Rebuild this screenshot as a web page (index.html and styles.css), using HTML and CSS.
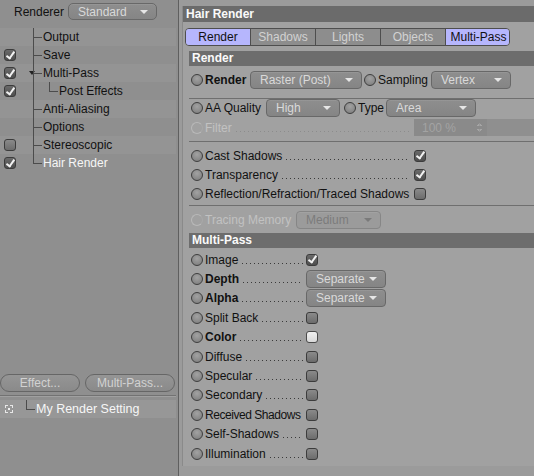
FILE: index.html
```html
<!DOCTYPE html>
<html>
<head>
<meta charset="utf-8">
<link rel="stylesheet" href="styles.css">
</head>
<body>
<div class="app">
  <div class="left">
    <div class="renderer-row">
      <span class="renderer-label">Renderer</span>
      <div class="dd dd-std"><span>Standard</span><i class="arr"></i></div>
    </div>
    <div class="tree">
      <div class="trow band"><div class="cbcol"></div><div class="branch"></div><span class="tl">Output</span></div>
      <div class="trow"><div class="cbcol"><span class="cb on"></span></div><div class="branch"></div><span class="tl">Save</span></div>
      <div class="trow band"><div class="cbcol"><span class="cb on"></span><span class="tri"></span></div><div class="branch"></div><span class="tl">Multi-Pass</span></div>
      <div class="trow"><div class="cbcol"><span class="cb on"></span></div><div class="branch pass"></div><div class="branch last"></div><span class="tl">Post Effects</span></div>
      <div class="trow band"><div class="cbcol"></div><div class="branch"></div><span class="tl">Anti-Aliasing</span></div>
      <div class="trow"><div class="cbcol"></div><div class="branch"></div><span class="tl">Options</span></div>
      <div class="trow band"><div class="cbcol"><span class="cb"></span></div><div class="branch"></div><span class="tl">Stereoscopic</span></div>
      <div class="trow"><div class="cbcol"><span class="cb on"></span></div><div class="branch last"></div><span class="tl white">Hair Render</span></div>
    </div>
    <div class="btns">
      <div class="pill p1">Effect...</div>
      <div class="pill p2">Multi-Pass...</div>
    </div>
    <div class="lsep"></div>
    <div class="setrow">
      <span class="seticon"><span class="dot"></span></span>
      <div class="branch last sb"></div>
      <span class="tl white">My Render Setting</span>
    </div>
  </div>
  <div class="right">
    <div class="content">
      <div class="hdr">Hair Render</div>
      <div class="tabs">
        <div class="tab act">Render</div>
        <div class="tab">Shadows</div>
        <div class="tab">Lights</div>
        <div class="tab">Objects</div>
        <div class="tab act last">Multi-Pass</div>
      </div>
      <div class="sec">
        <div class="sechdr">Render</div>
        <div class="row r-render">
          <span class="rd"></span><span class="lbl b w45">Render</span>
          <div class="dd w112"><span>Raster (Post)</span><i class="arr"></i></div>
          <span class="rd ml2"></span><span class="lbl w53">Sampling</span>
          <div class="dd w80"><span>Vertex</span><i class="arr"></i></div>
        </div>
        <div class="sep s1"></div>
        <div class="row r-aa">
          <span class="rd"></span><span class="lbl w61">AA Quality</span>
          <div class="dd w74"><span>High</span><i class="arr"></i></div>
          <span class="rd ml4"></span><span class="lbl w28">Type</span>
          <div class="dd w90"><span>Area</span><i class="arr"></i></div>
        </div>
        <div class="row r-filter">
          <span class="rd fade"></span><span class="lbl lw1 faded"><span class="t">Filter</span><span class="dots fdots"></span></span>
          <div class="num"><span>100 %</span><span class="spin"></span></div>
          <div class="slider"></div>
        </div>
        <div class="sep s2"></div>
        <div class="row r19 first">
          <span class="rd"></span><span class="lbl lw1"><span class="t">Cast Shadows</span><span class="dots"></span></span>
          <span class="cb on"></span>
        </div>
        <div class="row r19">
          <span class="rd"></span><span class="lbl lw1"><span class="t">Transparency</span><span class="dots"></span></span>
          <span class="cb on"></span>
        </div>
        <div class="row r19">
          <span class="rd"></span><span class="lbl lw1"><span class="t">Reflection/Refraction/Traced Shadows</span><span class="dots"></span></span>
          <span class="cb"></span>
        </div>
        <div class="sep s3"></div>
        <div class="row r-trace">
          <span class="rd fade"></span><span class="lbl w91 faded">Tracing Memory</span>
          <div class="dd w85 ddfade"><span>Medium</span><i class="arr"></i></div>
        </div>
      </div>
      <div class="sec mp">
        <div class="sechdr">Multi-Pass</div>
        <div class="mprows">
          <div class="row mrow"><span class="rd"></span><span class="lbl lw2"><span class="t">Image</span><span class="dots"></span></span><span class="cb on"></span></div>
          <div class="row mrow"><span class="rd"></span><span class="lbl lw2"><span class="t b">Depth</span><span class="dots"></span></span><div class="dd w80"><span>Separate</span><i class="arr"></i></div></div>
          <div class="row mrow"><span class="rd"></span><span class="lbl lw2"><span class="t b">Alpha</span><span class="dots"></span></span><div class="dd w80"><span>Separate</span><i class="arr"></i></div></div>
          <div class="row mrow"><span class="rd"></span><span class="lbl lw2"><span class="t">Split Back</span><span class="dots"></span></span><span class="cb"></span></div>
          <div class="row mrow"><span class="rd"></span><span class="lbl lw2"><span class="t b">Color</span><span class="dots"></span></span><span class="cb white"></span></div>
          <div class="row mrow"><span class="rd"></span><span class="lbl lw2"><span class="t">Diffuse</span><span class="dots"></span></span><span class="cb"></span></div>
          <div class="row mrow"><span class="rd"></span><span class="lbl lw2"><span class="t">Specular</span><span class="dots"></span></span><span class="cb"></span></div>
          <div class="row mrow"><span class="rd"></span><span class="lbl lw2"><span class="t">Secondary</span><span class="dots"></span></span><span class="cb"></span></div>
          <div class="row mrow"><span class="rd"></span><span class="lbl lw2"><span class="t tight">Received Shadows</span></span><span class="cb"></span></div>
          <div class="row mrow"><span class="rd"></span><span class="lbl lw2"><span class="t">Self-Shadows</span><span class="dots"></span></span><span class="cb"></span></div>
          <div class="row mrow"><span class="rd"></span><span class="lbl lw2"><span class="t">Illumination</span><span class="dots"></span></span><span class="cb"></span></div>
        </div>
      </div>
    </div>
  </div>
</div>
</body>
</html>
```
FILE: styles.css
```css
* { box-sizing: border-box; }
html, body { margin: 0; padding: 0; }
body {
  width: 534px; height: 476px; overflow: hidden;
  font-family: "Liberation Sans", Arial, sans-serif;
  font-size: 12px; color: #111;
  background: #9b9b9b;
}
.app { display: flex; height: 476px; }

/* ---------- left ---------- */
.left {
  width: 179px; flex: none; height: 476px;
  background: #8f8f8f;
  border-right: 1px solid #5f5f5f;
  display: flex; flex-direction: column;
}
.renderer-row {
  display: flex; align-items: center;
  margin-top: 3px; height: 17px; padding-left: 14px;
}
.renderer-label { width: 54px; color: #111; }
.dd {
  height: 18px; flex: none;
  display: flex; align-items: center; justify-content: space-between;
  padding: 0 8px 0 9px;
  border: 1px solid #686868; border-radius: 4px;
  background: linear-gradient(#8e8e8e, #858585);
  color: #d9d9d9;
  box-shadow: inset 0 1px 0 rgba(255,255,255,0.08);
}
.dd span { line-height: 16px; }
.arr {
  width: 0; height: 0;
  border-left: 4px solid transparent; border-right: 4px solid transparent;
  border-top: 4px solid #e6e6e6;
}
.dd-std { width: 89px; height: 17px; border-radius: 5px; }

.tree { margin-top: 8px; }
.trow { display: flex; align-items: stretch; height: 18px; width: 176px; }
.trow.band { background: #949494; }
.cbcol { width: 33px; display: flex; align-items: center; padding-left: 4px; flex: none; }
.tri {
  width: 0; height: 0; margin-left: 13px; margin-right: -4px;
  border-left: 3.5px solid transparent; border-right: 3.5px solid transparent;
  border-top: 4px solid #222;
}
.branch {
  width: 9px; flex: none;
  background:
    linear-gradient(#4c4c4c, #4c4c4c) left top / 1px 100% no-repeat,
    linear-gradient(#4c4c4c, #4c4c4c) left 9px / 9px 1px no-repeat;
}
.branch.last {
  background:
    linear-gradient(#4c4c4c, #4c4c4c) left top / 1px 10px no-repeat,
    linear-gradient(#4c4c4c, #4c4c4c) left 9px / 9px 1px no-repeat;
}
.branch.pass {
  width: 16px;
  background: linear-gradient(#4c4c4c, #4c4c4c) left top / 1px 100% no-repeat;
}
.tl { line-height: 18px; color: #111; padding-left: 1px; white-space: nowrap; }
.tl.white { color: #f6f6f6; }

.cb {
  width: 12px; height: 12px; flex: none;
  border: 1px solid #3c3c3c; border-radius: 3px;
  background: linear-gradient(#8a8a8a, #6c6c6c);
  display: flex; align-items: center; justify-content: center;
}
.cb.on { background: linear-gradient(#6a6a6a, #4e4e4e); }
.cb.on::after {
  content: ""; width: 3px; height: 7px;
  border: solid #f2f2f2; border-width: 0 2px 2px 0;
  transform: rotate(35deg); margin-top: -2px; margin-left: 1px;
}
.cb.white { background: linear-gradient(#f0f0f0, #d8d8d8); border-color: #4a4a4a; }

.btns { display: flex; margin-top: 202px; gap: 5px; }
.pill {
  height: 18px; border: 1px solid #666; border-radius: 9px;
  background: linear-gradient(#959595, #8a8a8a);
  color: #d2d2d2;
  display: flex; align-items: center; justify-content: center;
}
.p1 { width: 80px; }
.p2 { width: 90px; }
.lsep { height: 2px; margin-top: 3px; width: 176px; border-top: 1px solid #727272; border-bottom: 1px solid #a0a0a0; }
.setrow {
  display: flex; align-items: stretch; height: 18px; width: 176px;
  margin-top: 3px; background: #979797;
}
.seticon {
  width: 8px; height: 8px; margin: 5px 0 0 5px; flex: none;
  border: 1px dashed #e8e8e8;
  display: flex; align-items: center; justify-content: center;
}
.seticon .dot { width: 2px; height: 2px; background: #eee; }
.branch.sb { margin-left: 13px; }
.setrow .tl { font-size: 12.5px; }

/* ---------- right ---------- */
.right { flex: 1; padding: 6px 0 10px 3px; background: #9b9b9b; }
.content { height: 100%; background: #a1a1a1; border-left: 1px solid #8a8a8a; }
.hdr {
  height: 16px; background: #6b6b6b; color: #fafafa;
  font-weight: bold; line-height: 16px; padding-left: 3px;
}
.tabs {
  display: flex; margin: 6px 0 0 2px; width: 325px; height: 18px;
  border: 1px solid #4e4e4e; border-radius: 4px; overflow: hidden;
}
.tab {
  width: 65px; flex: none; border-right: 1px solid #4e4e4e;
  background: #8d8d8d; color: #d2d2d2;
  display: flex; align-items: center; justify-content: center; line-height: 16px;
}
.tab.act { background: #b6b6fd; color: #111; }
.tab.last { border-right: none; }

.sec { margin: 5px 0 0 6px; }
.sechdr {
  height: 15px; background: #6d6d6d; color: #fafafa;
  font-weight: bold; line-height: 15px; padding-left: 3px;
}
.row { display: flex; align-items: center; padding-left: 2px; }
.rd {
  width: 12px; height: 12px; flex: none; border-radius: 50%;
  border: 1px solid #3e3e3e;
  background: radial-gradient(circle at 50% 35%, #a2a2a2, #7a7a7a);
  margin-right: 2px;
}
.rd.fade { border: 1px solid #b9b9b9; background: transparent; border-right-color: #a8a8a8; }
.ml2 { margin-left: 2px; }
.ml4 { margin-left: 4px; }
.lbl { white-space: nowrap; flex: none; display: flex; align-items: flex-end; }
.lbl.b, .t.b { font-weight: bold; }
.t.tight { letter-spacing: -0.45px; }
.faded { color: #c2c2c2; }
.w45 { width: 45px; } .w53 { width: 53px; } .w61 { width: 61px; } .w28 { width: 28px; } .w91 { width: 91px; }
.dd.w112 { width: 112px; } .dd.w80 { width: 80px; } .dd.w74 { width: 74px; } .dd.w90 { width: 90px; } .dd.w85 { width: 85px; }
.dd.ddfade { background: #9b9b9b; border-color: #868686; color: #7b7b7b; }
.dd.ddfade .arr { border-top-color: #7a7a7a; }

.lw1 { width: 209px; padding-right: 5px; }
.lw2 { width: 101px; padding-right: 3px; }
.dots {
  flex: 1; height: 1px; margin: 0 0 3px 4px;
  background: linear-gradient(to right, #3a3a3a 1px, transparent 1px) left / 4px 1px repeat-x;
}
.fdots { background: linear-gradient(to right, #8c8c8c 1px, transparent 1px) left / 4px 1px repeat-x; }

.r-render { height: 19px; margin-top: 4px; }
.sep { height: 1px; background: #6f6f6f; border-bottom: 0; }
.s1 { margin-top: 9px; }
.r-aa { height: 18px; margin-top: 0; }
.r-filter { height: 17px; margin-top: 2px; }
.num {
  width: 73px; height: 17px; flex: none; background: #8a8a8a;
  display: flex; align-items: center; justify-content: space-between;
  padding: 0 5px 0 8px; color: #a3a3a3;
}
.spin {
  width: 5px; height: 9px;
  background:
    linear-gradient(to bottom right, transparent 50%, #a6a6a6 50%) left top / 2.5px 3px no-repeat,
    linear-gradient(to bottom left, transparent 50%, #a6a6a6 50%) right top / 2.5px 3px no-repeat,
    linear-gradient(to top right, transparent 50%, #a6a6a6 50%) left bottom / 2.5px 3px no-repeat,
    linear-gradient(to top left, transparent 50%, #a6a6a6 50%) right bottom / 2.5px 3px no-repeat;
}
.slider { flex: 1; height: 17px; background: #8f8f8f; }
.s2 { margin-top: 5px; }
.r19 { height: 19px; }
.r19.first { margin-top: 4px; }
.s3 { margin-top: 2px; }
.r-trace { height: 18px; margin-top: 5px; }
.mp { margin-top: 4px; }
.mprows { padding-top: 2px; }
.mrow { height: 19.4px; }
```
